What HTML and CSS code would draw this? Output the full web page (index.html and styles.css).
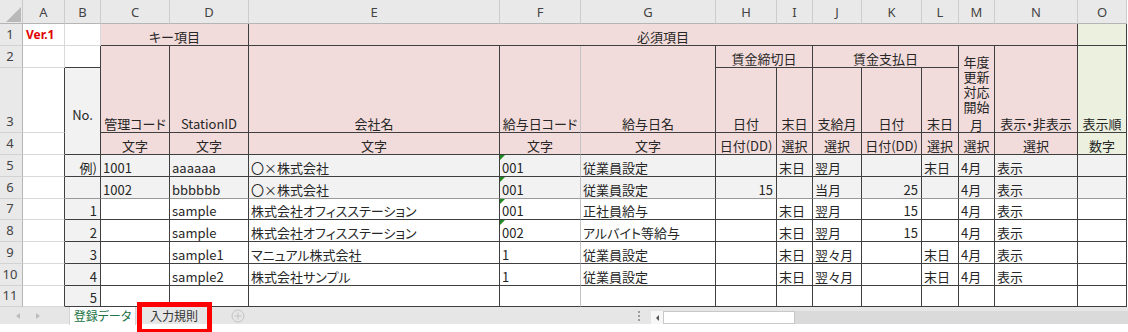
FILE: index.html
```html
<!DOCTYPE html>
<html lang="ja">
<head>
<meta charset="utf-8">
<title>登録データ</title>
<link rel="stylesheet" href="styles.css">
</head>
<body>
<div class="sheet">
  <div class="grid">
    <div class="row">
      <div class="cell corner"><svg width="15" height="15" viewBox="0 0 15 15"><polygon points="15,0 15,15 0,15" fill="#b9b9b9"/></svg></div>
      <div class="cell ch">A</div><div class="cell ch">B</div><div class="cell ch">C</div><div class="cell ch">D</div>
      <div class="cell ch">E</div><div class="cell ch">F</div><div class="cell ch">G</div><div class="cell ch">H</div>
      <div class="cell ch">I</div><div class="cell ch">J</div><div class="cell ch">K</div><div class="cell ch">L</div>
      <div class="cell ch">M</div><div class="cell ch">N</div><div class="cell ch">O</div>
    </div>

    <div class="row">
      <div class="cell rh">1</div>
      <div class="cell ver">Ver.1</div>
      <div class="cell"></div>
      <div class="cell t pk c span2">キー項目</div>
      <div class="cell t pk c span10">必須項目</div>
      <div class="cell t gr"></div>
    </div>

    <div class="row">
      <div class="cell rh">2</div>
      <div class="cell"></div>
      <div class="cell t"></div>
      <div class="cell t pk c rs2">管理コード</div>
      <div class="cell t pk c rs2">StationID</div>
      <div class="cell t pk c rs2">会社名</div>
      <div class="cell t pk c rs2 lr">給与日コード</div>
      <div class="cell t pk c rs2">給与日名</div>
      <div class="cell t pk c span2">賃金締切日</div>
      <div class="cell t pk c span3">賃金支払日</div>
      <div class="cell t pk c rs2 stack"><span class="wrap">年度更新対応開始</span><span class="last">月</span></div>
      <div class="cell t pk c rs2">表示・非表示</div>
      <div class="cell t gr c rs2">表示順</div>
    </div>

    <div class="row">
      <div class="cell rh">3</div>
      <div class="cell dr"></div>
      <div class="cell t gy c mid rs2">No.</div>
      <div class="cell t pk c">日付</div>
      <div class="cell t pk c">末日</div>
      <div class="cell t pk c">支給月</div>
      <div class="cell t pk c">日付</div>
      <div class="cell t pk c">末日</div>
    </div>

    <div class="row">
      <div class="cell rh">4</div>
      <div class="cell dr"></div>
      <div class="cell t pk c">文字</div>
      <div class="cell t pk c">文字</div>
      <div class="cell t pk c">文字</div>
      <div class="cell t pk c lr">文字</div>
      <div class="cell t pk c">文字</div>
      <div class="cell t pk c tight">日付(DD)</div>
      <div class="cell t pk c">選択</div>
      <div class="cell t pk c">選択</div>
      <div class="cell t pk c tight">日付(DD)</div>
      <div class="cell t pk c">選択</div>
      <div class="cell t pk c">選択</div>
      <div class="cell t pk c">選択</div>
      <div class="cell t gr c">数字</div>
    </div>

    <div class="row">
      <div class="cell rh">5</div>
      <div class="cell dr"></div>
      <div class="cell t gy r">例)</div>
      <div class="cell t gy">1001</div>
      <div class="cell t gy">aaaaaa</div>
      <div class="cell t gy">〇×株式会社</div>
      <div class="cell t gy lr tri">001</div>
      <div class="cell t gy">従業員設定</div>
      <div class="cell t gy"></div>
      <div class="cell t gy">末日</div>
      <div class="cell t gy">翌月</div>
      <div class="cell t gy"></div>
      <div class="cell t gy">末日</div>
      <div class="cell t gy">4月</div>
      <div class="cell t gy">表示</div>
      <div class="cell t gy"></div>
    </div>

    <div class="row soft">
      <div class="cell rh">6</div>
      <div class="cell dr"></div>
      <div class="cell t gy r"></div>
      <div class="cell t gy">1002</div>
      <div class="cell t gy">bbbbbb</div>
      <div class="cell t gy">〇×株式会社</div>
      <div class="cell t gy lr tri">001</div>
      <div class="cell t gy">従業員設定</div>
      <div class="cell t gy r">15</div>
      <div class="cell t gy"></div>
      <div class="cell t gy">当月</div>
      <div class="cell t gy r">25</div>
      <div class="cell t gy"></div>
      <div class="cell t gy">4月</div>
      <div class="cell t gy">表示</div>
      <div class="cell t gy"></div>
    </div>

    <div class="row">
      <div class="cell rh">7</div>
      <div class="cell dr"></div>
      <div class="cell t gy r">1</div>
      <div class="cell t"></div>
      <div class="cell t">sample</div>
      <div class="cell t">株式会社オフィスステーション</div>
      <div class="cell t lr tri">001</div>
      <div class="cell t">正社員給与</div>
      <div class="cell t"></div>
      <div class="cell t">末日</div>
      <div class="cell t">翌月</div>
      <div class="cell t r">15</div>
      <div class="cell t"></div>
      <div class="cell t">4月</div>
      <div class="cell t">表示</div>
      <div class="cell t"></div>
    </div>

    <div class="row">
      <div class="cell rh">8</div>
      <div class="cell dr"></div>
      <div class="cell t gy r">2</div>
      <div class="cell t"></div>
      <div class="cell t">sample</div>
      <div class="cell t">株式会社オフィスステーション</div>
      <div class="cell t lr tri">002</div>
      <div class="cell t">アルバイト等給与</div>
      <div class="cell t"></div>
      <div class="cell t">末日</div>
      <div class="cell t">翌月</div>
      <div class="cell t r">15</div>
      <div class="cell t"></div>
      <div class="cell t">4月</div>
      <div class="cell t">表示</div>
      <div class="cell t"></div>
    </div>

    <div class="row">
      <div class="cell rh">9</div>
      <div class="cell dr"></div>
      <div class="cell t gy r">3</div>
      <div class="cell t"></div>
      <div class="cell t">sample1</div>
      <div class="cell t">マニュアル株式会社</div>
      <div class="cell t lr">1</div>
      <div class="cell t">従業員設定</div>
      <div class="cell t"></div>
      <div class="cell t">末日</div>
      <div class="cell t">翌々月</div>
      <div class="cell t"></div>
      <div class="cell t">末日</div>
      <div class="cell t">4月</div>
      <div class="cell t">表示</div>
      <div class="cell t"></div>
    </div>

    <div class="row">
      <div class="cell rh">10</div>
      <div class="cell dr"></div>
      <div class="cell t gy r">4</div>
      <div class="cell t"></div>
      <div class="cell t">sample2</div>
      <div class="cell t">株式会社サンプル</div>
      <div class="cell t lr">1</div>
      <div class="cell t">従業員設定</div>
      <div class="cell t"></div>
      <div class="cell t">末日</div>
      <div class="cell t">翌々月</div>
      <div class="cell t"></div>
      <div class="cell t">末日</div>
      <div class="cell t">4月</div>
      <div class="cell t">表示</div>
      <div class="cell t"></div>
    </div>

    <div class="row">
      <div class="cell rh">11</div>
      <div class="cell dr"></div>
      <div class="cell t gy r">5</div>
      <div class="cell t"></div>
      <div class="cell t"></div>
      <div class="cell t"></div>
      <div class="cell t lr"></div>
      <div class="cell t"></div>
      <div class="cell t"></div>
      <div class="cell t"></div>
      <div class="cell t"></div>
      <div class="cell t"></div>
      <div class="cell t"></div>
      <div class="cell t"></div>
      <div class="cell t"></div>
      <div class="cell t"></div>
    </div>
  </div>

  <div class="tabbar">
    <div class="tabs">
      <div class="nav">
        <svg width="4" height="6" viewBox="0 0 4 6"><polygon points="4,0 4,6 0,3" fill="#bdbdbd"/></svg>
        <svg width="4" height="6" viewBox="0 0 4 6"><polygon points="0,0 0,6 4,3" fill="#bdbdbd"/></svg>
      </div>
      <div class="tab active">登録データ</div>
      <div class="tab">入力規則</div>
      <div class="add"><svg width="14" height="14" viewBox="0 0 14 14"><circle cx="7" cy="7" r="6" fill="none" stroke="#c4c4c4" stroke-width="1"/><path d="M7 3.5V10.5M3.5 7H10.5" stroke="#c4c4c4" stroke-width="1"/></svg></div>
    </div>
    <div class="splitter"><i></i><i></i><i></i></div>
    <div class="hscroll">
      <div class="hbtn"><svg width="3" height="6" viewBox="0 0 3 6"><polygon points="3,0 3,6 0,3" fill="#555"/></svg></div>
      <div class="thumb"></div>
      <div class="track"></div>
    </div>
    <div class="mark"></div>
  </div>
</div>
</body>
</html>
```

FILE: styles.css
```css
:root {
  --g: #d9d9d9;
  --d: #3f3f3f;
  --l: #c4c4c4;
}

html, body {
  margin: 0;
  padding: 0;
  background: #ffffff;
}

body {
  font-family: "Noto Sans CJK JP", "Noto Sans", sans-serif;
}

.sheet {
  width: 1128px;
  height: 332px;
  overflow: hidden;
  position: relative;
}

.grid {
  display: grid;
  width: 1127px;
  grid-template-columns: 23px 42px 36px 69px 79px 251px 81px 135px 61px 36px 49px 60px 37px 36px 83px 49px;
  grid-template-rows: 24px 22px 22px 65px 22px 22px 22px 21px 22px 22px 22px 21px;
}

.row {
  display: contents;
}

.cell {
  box-sizing: border-box;
  min-width: 0;
  border-right: 1px solid var(--g);
  border-bottom: 1px solid var(--g);
  display: flex;
  align-items: flex-end;
  justify-content: flex-start;
  padding: 0 2px 0 2px;
  font-family: "Noto Sans CJK JP", sans-serif;
  font-feature-settings: "palt";
  font-size: 13px;
  line-height: 16px;
  color: #262626;
  white-space: nowrap;
  overflow: hidden;
  position: relative;
}

.corner {
  background: #e9e9e9;
  border-right-color: #c9c9c9;
  border-bottom-color: #b5b5b5;
  justify-content: flex-end;
  padding: 0 1px 1px 0;
}

.ch {
  background: #e9e9e9;
  border-right-color: #cdcdcd;
  border-bottom-color: #b5b5b5;
  align-items: center;
  justify-content: center;
  font-family: "Noto Sans", "Liberation Sans", sans-serif;
  font-feature-settings: normal;
  font-size: 13px;
  color: #444444;
  padding: 0;
}

.rh {
  background: #e9e9e9;
  border-right-color: #b5b5b5;
  border-bottom-color: #d2d2d2;
  justify-content: center;
  padding: 0 2px 3px 0;
  font-family: "Noto Sans", "Liberation Sans", sans-serif;
  font-feature-settings: normal;
  font-size: 13px;
  color: #444444;
}

.ver {
  color: #e00000;
  font-weight: 700;
  font-family: "Noto Sans", "Liberation Sans", sans-serif;
  font-feature-settings: normal;
  font-size: 12px;
  padding-left: 3px;
  padding-bottom: 2px;
}

.t {
  border-right-color: var(--d);
  border-bottom-color: var(--d);
}

.t.lr {
  border-right-color: var(--l);
}

.soft > .t {
  border-bottom-color: #9a9a9a;
}

.dr {
  border-right-color: var(--d);
}

.pk { background: #f2dcdb; }
.gr { background: #ebf1de; }
.gy { background: #f2f2f2; }

.c { justify-content: center; }
.r { justify-content: flex-end; padding-right: 3px; }
.mid { align-items: center; padding-top: 8px; }
.tight { padding: 0 1px; }

.span2 { grid-column: span 2; }
.span3 { grid-column: span 3; }
.span10 { grid-column: span 10; }
.rs2 { grid-row: span 2; }

.stack {
  flex-direction: column;
  align-items: center;
  justify-content: flex-end;
  line-height: 15px;
  white-space: normal;
}

.stack .wrap {
  display: block;
  width: 26px;
  text-align: center;
  word-break: break-all;
}

.stack .last {
  display: block;
  margin-top: 3px;
}

.tri::before {
  content: "";
  position: absolute;
  left: 0;
  top: 0;
  border-top: 5px solid #1f8a1f;
  border-right: 5px solid transparent;
}

/* sheet tab bar */
.tabbar {
  position: relative;
  display: flex;
  height: 17px;
  background: #e6e6e6;
}

.tabs {
  width: 634px;
  display: flex;
  align-items: stretch;
}

.nav {
  width: 69px;
  display: flex;
  align-items: center;
  gap: 16px;
  padding-left: 16px;
  box-sizing: border-box;
}

.tab {
  display: flex;
  align-items: center;
  justify-content: center;
  font-size: 12px;
  line-height: 16px;
  font-feature-settings: "palt";
  color: #333333;
  box-sizing: border-box;
}

.tab.active {
  width: 67px;
  height: 18px;
  background: #ffffff;
  color: #217346;
  border-left: 1px solid #d4d4d4;
  border-right: 1px solid #d4d4d4;
}

.tab:not(.active) {
  width: 76px;
}

.add {
  display: flex;
  align-items: center;
  padding-left: 19px;
}

.splitter {
  width: 17px;
  display: flex;
  flex-direction: column;
  align-items: flex-start;
  justify-content: center;
  gap: 2px;
  padding-left: 4px;
  box-sizing: border-box;
}

.splitter i {
  display: block;
  width: 2px;
  height: 2px;
  background: #9c9c9c;
}

.hscroll {
  flex: 1;
  display: flex;
  margin-top: 4px;
  height: 13px;
  background: #dadada;
}

.hbtn {
  width: 12px;
  background: #f7f7f7;
  display: flex;
  align-items: center;
  justify-content: center;
}

.thumb {
  width: 132px;
  box-sizing: border-box;
  background: #ffffff;
  border: 1px solid #c8c8c8;
}

.track {
  flex: 1;
}

.mark {
  position: absolute;
  left: 137px;
  top: -5px;
  width: 75px;
  height: 32px;
  box-sizing: border-box;
  border: 5px solid #ff0000;
}
```
